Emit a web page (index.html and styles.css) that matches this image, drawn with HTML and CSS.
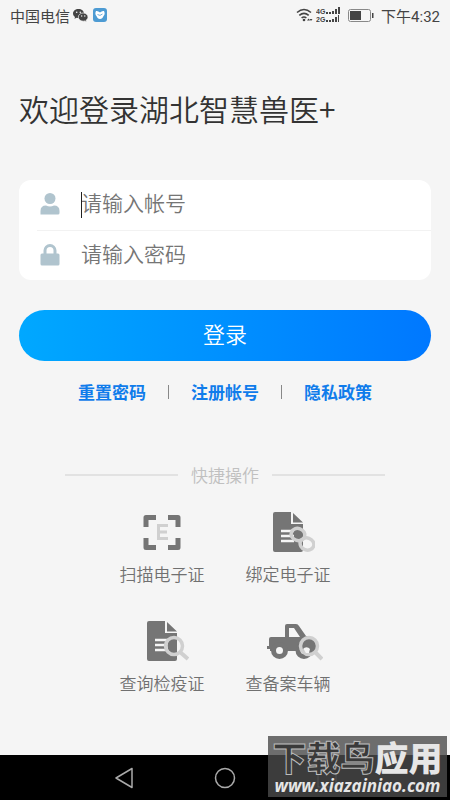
FILE: index.html
```html
<!DOCTYPE html>
<html lang="zh-CN">
<head>
<meta charset="utf-8">
<meta name="viewport" content="width=device-width, initial-scale=1">
<title>湖北智慧兽医+</title>
<link rel="stylesheet" href="styles.css">
</head>
<body>
<div class="screen">
  <header class="status">
    <div class="status-group">
      <span>中国电信</span>
      <svg class="wechat" viewBox="0 0 15 13" width="15" height="13" aria-hidden="true">
        <path d="M5.5 0C2.4 0 0 2 0 4.5 0 6 .8 7.200 2 8L1.500 9.800 3.600 8.700Q4.500 9 5.500 9C8.600 9 11 7 11 4.500S8.600 0 5.500 0Z" fill="#444"/>
        <path d="M10.200 4C7.500 4 5.300 5.800 5.300 8.100S7.500 12.200 10.200 12.200Q11 12.200 11.800 11.900L13.500 12.800 13.100 11.300C14.300 10.500 15 9.400 15 8.100 15 5.800 12.900 4 10.200 4Z" fill="#444" stroke="#f5f5f5" stroke-width=".7"/>
        <g fill="#f5f5f5"><circle cx="3.700" cy="3.300" r=".8"/><circle cx="7.300" cy="3.300" r=".8"/><circle cx="8.700" cy="7" r=".7"/><circle cx="11.800" cy="7" r=".7"/></g>
      </svg>
      <svg class="app" viewBox="0 0 14 14" width="14" height="14" aria-hidden="true">
        <rect width="14" height="14" rx="3" fill="#4d9bd3"/>
        <path d="M3 3Q5 2.500 7 4.500 9 2.500 11 3 12.500 6 10.500 8 9.500 11 7 11 4.500 11 3.500 8 1.500 6 3 3Z" fill="#fff"/>
        <path d="M4.500 6.500Q7 8.500 9.500 6" fill="none" stroke="#4d9bd3" stroke-width=".8"/>
      </svg>
    </div>
    <div class="status-group">
      <svg viewBox="0 0 17 14" width="17" height="14" aria-hidden="true">
        <g fill="none" stroke="#444" stroke-width="1.600"><path d="M1 4.500Q8 -1.500 15 4.500M3.300 7.300Q8 3.300 12.700 7.300M5.600 10Q8 8 10.400 10"/></g>
        <circle cx="8" cy="12" r="1.300" fill="#444"/><path d="M11 12.500l1.500-2 1.500 2zM13.500 11h3l-1.500 2z" fill="#444"/>
      </svg>
      <svg class="signal" viewBox="0 0 25 18" width="25" height="18" aria-hidden="true">
        <g fill="#444"><text x="0" y="8">4G</text><text x="0" y="16">2G</text>
        <path d="M10 6h2v2h-2zM13 6h2v2h-2zM16 5h2v3h-2zM19 3h2v5h-2zM22 1h2v7h-2zM10 14h2v2h-2zM13 14h2v2h-2zM16 13h2v3h-2zM19 11h2v5h-2zM22 9h1v7h-1z"/></g>
      </svg>
      <svg class="battery" viewBox="0 0 26 13" width="26" height="13" aria-hidden="true">
        <rect x=".5" y=".5" width="22" height="12" rx="2" fill="none" stroke="#888"/><path d="M2 2h11v9H2zM24 4h1.500v5H24z" fill="#444"/>
      </svg>
      <span>下午4:32</span>
    </div>
  </header>

  <main class="content">
    <h1>欢迎登录湖北智慧兽医+</h1>
    <form class="login">
      <div class="fields">
        <div class="field">
          <label for="account" aria-label="帐号">
            <svg viewBox="0 0 20 22" width="20" height="22"><circle cx="10" cy="5.500" r="5.500" fill="#b0c4ce"/><path d="M.5 21.500V18Q.5 12.500 6 12.500 10 14.500 14 12.500 19.500 12.500 19.500 18V20Q19.500 21.500 18 21.500Z" fill="#b0c4ce"/></svg>
          </label>
          <input id="account" type="text" placeholder="请输入帐号">
          <span class="caret"></span>
        </div>
        <div class="field">
          <label for="password" aria-label="密码">
            <svg viewBox="0 0 20 22" width="20" height="22"><path d="M5 11V6.500A5 5 0 0 1 15 6.500V11" fill="none" stroke="#b0c4ce" stroke-width="3"/><rect x=".5" y="9.500" width="19" height="12" rx="1.500" fill="#b0c4ce"/></svg>
          </label>
          <input id="password" type="password" placeholder="请输入密码">
        </div>
      </div>
      <button class="submit" type="button">登录</button>
    </form>
    <nav class="links">
      <a href="#reset">重置密码</a><span class="bar"></span><a href="#register">注册帐号</a><span class="bar"></span><a href="#privacy">隐私政策</a>
    </nav>

    <section class="quick">
      <h2>快捷操作</h2>
      <div class="grid">
        <a class="tile" href="#scan">
          <svg viewBox="1 0 54 42" width="54" height="42" aria-hidden="true">
            <path d="M12 15V5.500H22M34 5.500H44V15M44 26V35.500H34M22 35.500H12V26" fill="none" stroke="#757575" stroke-width="5" stroke-linejoin="round"/>
            <path d="M24.500 12V28M23 13.500H34M23 20H33M23 26.500H34" fill="none" stroke="#d0d0d0" stroke-width="3"/>
          </svg>
          <span>扫描电子证</span>
        </a>
        <a class="tile" href="#bind">
          <svg viewBox="0 0 54 42" width="54" height="42" aria-hidden="true">
            <path d="M14 0H30V12H42V38Q42 40 40 40H14Q12 40 12 38V2Q12 0 14 0ZM32 1L42 10.500H32Z" fill="#757575"/>
            <path d="M20 19H33M20 24H33M20 29H33" stroke="#f5f5f5" stroke-width="2.500"/>
            <g fill="none" stroke="#d0d0d0" stroke-width="3.500"><ellipse cx="37" cy="22.500" rx="7" ry="6" transform="rotate(20 37 22.500)"/><ellipse cx="46" cy="32" rx="7" ry="6" transform="rotate(20 46 32)"/></g>
          </svg>
          <span>绑定电子证</span>
        </a>
        <a class="tile" href="#query">
          <svg viewBox="0 0 54 42" width="54" height="42" aria-hidden="true">
            <path d="M14 0H30V12H42V38Q42 40 40 40H14Q12 40 12 38V2Q12 0 14 0ZM32 1L42 10.500H32Z" fill="#757575"/>
            <path d="M20 19H33M20 24H33M20 29H33" stroke="#f5f5f5" stroke-width="2.500"/>
            <path d="M45 31L53 38" stroke="#d0d0d0" stroke-width="4"/>
            <circle cx="39" cy="25" r="8.500" fill="#f5f5f5"/>
            <path d="M39 16.500H42V33H39A8.500 8.500 0 0 1 39 16.500Z" fill="#757575"/>
            <circle cx="39" cy="25" r="8.500" fill="none" stroke="#d0d0d0" stroke-width="3.500"/>
          </svg>
          <span>查询检疫证</span>
        </a>
        <a class="tile" href="#vehicle">
          <svg viewBox="0 0 70 42" width="70" height="42" aria-hidden="true">
            <path d="M18 16H32V5Q32 3 34 3H43Q45 3 46 5L53 15 59 17V30H17V28H14V25H16V18Q16 16 18 16ZM36 7V16H47L41 7Z" fill="#757575" fill-rule="evenodd"/>
            <circle cx="26.500" cy="29.500" r="6" fill="#f5f5f5" stroke="#757575" stroke-width="5"/>
            <circle cx="51" cy="29.500" r="6" fill="#f5f5f5" stroke="#757575" stroke-width="5"/>
            <path d="M62 31L69 38" stroke="#d0d0d0" stroke-width="4"/>
            <circle cx="56" cy="25" r="8.500" fill="#757575" stroke="#d0d0d0" stroke-width="3.500"/>
            <path d="M50 28A4.500 4.500 0 0 1 57 28L56 32H53Z" fill="#f5f5f5"/>
          </svg>
          <span>查备案车辆</span>
        </a>
      </div>
    </section>
  </main>

  <footer class="navbar">
    <button type="button" aria-label="返回"><svg viewBox="0 0 22 22" width="22" height="22"><path d="M3 11L19 1.500V20.500Z" fill="none" stroke="#aaa" stroke-width="1.500" stroke-linejoin="round"/></svg></button>
    <button type="button" aria-label="主页"><svg viewBox="0 0 22 22" width="22" height="22"><circle cx="11" cy="11" r="9.500" fill="none" stroke="#aaa" stroke-width="1.500"/></svg></button>
    <button type="button" aria-label="最近任务"><svg viewBox="0 0 22 22" width="22" height="22"><rect x="2" y="2" width="18" height="18" fill="none" stroke="#777" stroke-width="1"/></svg></button>
  </footer>
  <div class="watermark">
    <div class="mark-name"><span class="outlined">下载鸟</span><span>应用</span></div>
    <div class="mark-url">www.xiazainiao.com</div>
  </div>
</div>
</body>
</html>
```
FILE: styles.css
```css
* { box-sizing: border-box; }
body {
  margin: 0;
  background: #f5f5f5;
  color: #333;
  font-family: "Noto Sans CJK SC DemiLight", "Noto Sans CJK SC", sans-serif;
  font-weight: 350;
}
a { text-decoration: none; color: inherit; }
button, input { font: inherit; border: 0; padding: 0; background: none; }
svg { display: block; }

.screen {
  position: relative;
  display: flex;
  flex-direction: column;
  min-height: 100vh;
}
.status {
  display: flex;
  justify-content: space-between;
  align-items: center;
  height: 32px;
  padding: 0 10px 2px;
  font-size: 15px;
  font-weight: 400;
  font-family: Roboto, "Noto Sans CJK SC", sans-serif;
  color: #444;
}
.status-group { display: flex; align-items: center; gap: 3px; }
.app { margin-left: 2px; }
.battery { margin: 0 4px; }
.signal text { font: bold 7px "Liberation Sans", sans-serif; }

.content { flex: 1; padding: 0 19px; }
h1 {
  margin: 54px 0 0;
  font-size: 30px;
  line-height: 44px;
  font-weight: 350;
}
.fields {
  margin-top: 50px;
  padding-left: 18px;
  border-radius: 12px;
  background: #fff;
}
.field {
  position: relative;
  display: flex;
  align-items: center;
  height: 50px;
  padding: 0 0 2px 3px;
  gap: 21px;
}
.field + .field { border-top: 1px solid #f2f2f2; }
.field input {
  flex: 1;
  min-width: 0;
  height: 48px;
  padding-bottom: 4px;
  outline: 0;
  font-size: 21px;
}
.field input::placeholder { color: #757575; opacity: 1; }
.caret {
  position: absolute;
  left: 44px;
  top: 12px;
  width: 1px;
  height: 26px;
  background: #222;
}
.submit {
  display: block;
  width: 100%;
  height: 51px;
  margin-top: 30px;
  padding-bottom: 6px;
  border-radius: 26px;
  background: linear-gradient(90deg, #00a8ff, #0078ff);
  color: #fff;
  font-size: 22px;
  font-weight: 400;
}
.links {
  display: flex;
  justify-content: center;
  align-items: center;
  gap: 22px;
  margin-top: 18px;
  font-family: "Noto Sans CJK SC", sans-serif;
  font-size: 17px;
  line-height: 26px;
  font-weight: 700;
  color: #107ceb;
}
.bar { width: 1px; height: 14px; background: #888; }

.quick { margin-top: 57px; }
h2 {
  display: flex;
  align-items: center;
  gap: 13px;
  margin: 0 46px;
  font-size: 17px;
  line-height: 26px;
  font-weight: 350;
  color: #c0c0c0;
}
h2::before, h2::after {
  content: "";
  flex: 1;
  height: 2px;
  background: #e2e2e2;
}
.grid {
  display: grid;
  grid-template-columns: 126px 126px;
  justify-content: center;
  row-gap: 34px;
  margin-top: 24px;
}
.tile {
  display: flex;
  flex-direction: column;
  align-items: center;
  gap: 7px;
  font-size: 17px;
  line-height: 26px;
  color: #707070;
}

.navbar {
  display: flex;
  justify-content: space-between;
  align-items: center;
  height: 45px;
  padding: 0 25%;
  background: #000;
}
.watermark {
  position: absolute;
  right: 3px;
  bottom: 3px;
  height: 61px;
  width: 179px;
  background: rgba(75, 75, 75, .8);
  color: #e6e6e6;
  text-align: center;
  white-space: nowrap;
}
.mark-name {
  font: 900 34px/42px "Noto Sans CJK SC", sans-serif;
}
.outlined { color: #3a3a3a; -webkit-text-stroke: 1px #bbb; }
.mark-url {
  font: italic 700 17px/16px "Open Sans", sans-serif;
}
```
